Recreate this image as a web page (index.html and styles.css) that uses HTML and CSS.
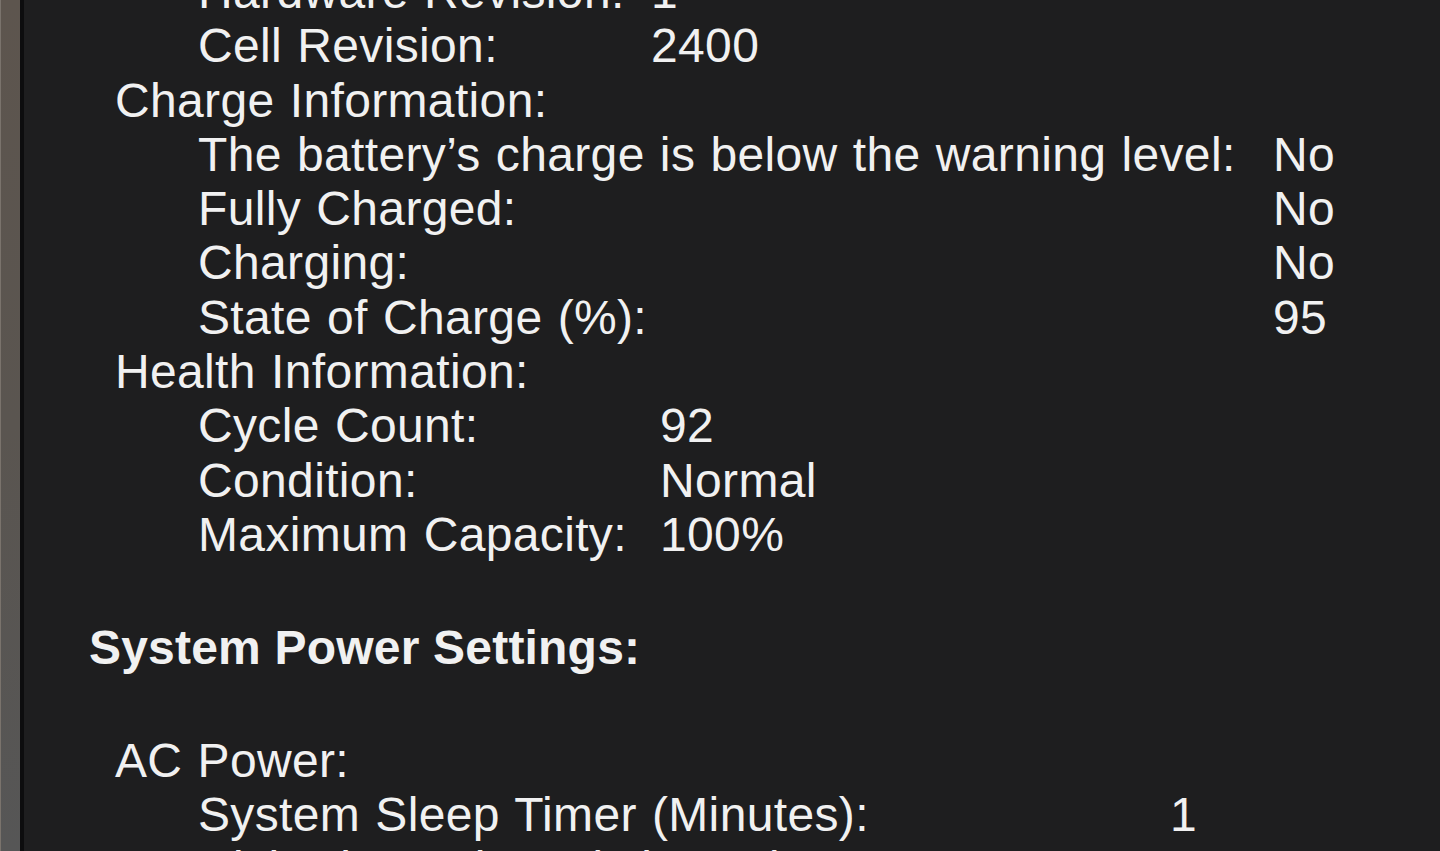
FILE: index.html
```html
<!DOCTYPE html>
<html lang="en">
<head>
<meta charset="utf-8">
<title>System Information — Power</title>
<link rel="stylesheet" href="styles.css">
</head>
<body>
<div class="screen">
  <div class="desktop"></div>
  <div class="window-edge"></div>
  <main class="pane">
    <div class="report">
      <div class="rows rows-cell">
        <span class="key">Hardware Revision:</span><span class="val">1</span>
        <span class="key">Cell Revision:</span><span class="val">2400</span>
      </div>

      <div class="section">Charge Information:</div>
      <div class="rows rows-charge">
        <span class="key">The battery’s charge is below the warning level:</span><span class="val">No</span>
        <span class="key">Fully Charged:</span><span class="val">No</span>
        <span class="key">Charging:</span><span class="val">No</span>
        <span class="key">State of Charge (%):</span><span class="val">95</span>
      </div>

      <div class="section">Health Information:</div>
      <div class="rows rows-health">
        <span class="key">Cycle Count:</span><span class="val">92</span>
        <span class="key">Condition:</span><span class="val">Normal</span>
        <span class="key">Maximum Capacity:</span><span class="val">100%</span>
      </div>

      <h2 class="heading">System Power Settings:</h2>

      <div class="section">AC Power:</div>
      <div class="rows rows-ac">
        <span class="key">System Sleep Timer (Minutes):</span><span class="val">1</span>
        <span class="key">Disk Sleep Timer (Minutes):</span><span class="val">10</span>
        <span class="key">Display Sleep Timer (Minutes):</span><span class="val">2</span>
      </div>
    </div>
  </main>
</div>
</body>
</html>
```

FILE: styles.css
```css
html, body {
  margin: 0;
  padding: 0;
  height: 100%;
  background: #1e1e1e;
  overflow: hidden;
}

.screen {
  display: flex;
  width: 1440px;
  height: 851px;
  overflow: hidden;
}

/* strip of desktop showing to the left of the window */
.desktop {
  flex: 0 0 20px;
  background: linear-gradient(180deg, #5d554e 0%, #5a5550 50%, #565656 100%);
  box-shadow: inset 1px 0 0 #7a736c;
}

.window-edge {
  flex: 0 0 4px;
  background: #0d0d0e;
}

.pane {
  flex: 1;
  background: #1e1e1f;
  overflow: hidden;
  font-family: "Liberation Sans", Arial, sans-serif;
  font-size: 48px;
  line-height: 54.3px;
  letter-spacing: 0.35px;
  word-spacing: 1.5px;
  color: #f1f1f1;
}

/* the outline is scrolled, so the first row sits partly above the top */
.report {
  margin-top: -35px;
  padding-left: 174px;
}

.rows {
  display: grid;
  column-gap: 0;
}

.rows-cell   { grid-template-columns: 453px auto; }
.rows-charge { grid-template-columns: 1075px auto; }
.rows-health { grid-template-columns: 462px auto; }
.rows-ac     { grid-template-columns: 972px auto; }

.key, .val {
  white-space: nowrap;
}

.section {
  margin-left: -83px;
}

.heading {
  margin: 59px 0 58px -109px;
  font-size: 48px;
  line-height: 54.3px;
  font-weight: 700;
  letter-spacing: 0.2px;
  word-spacing: 0;
}
```
